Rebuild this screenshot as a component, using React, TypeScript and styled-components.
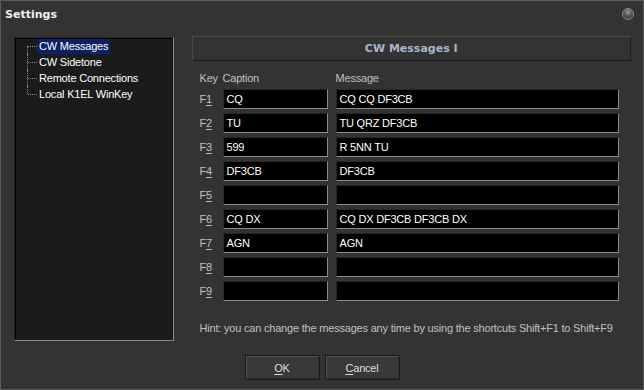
import React from 'react';
import styled, {createGlobalStyle} from "styled-components";

const GlobalStyle = createGlobalStyle`
  html, body {
    margin: 0;
    padding: 0;
    background: #333333;
  }
  body {
    font-family: "Liberation Sans", Arial, sans-serif;
    font-size: 11px;
    letter-spacing: -0.2px;
  }
`

interface Message {
    key: number,
    caption: string,
    text: string
}

const messages: Message[] = [
    {key: 1, caption: "CQ", text: "CQ CQ DF3CB"},
    {key: 2, caption: "TU", text: "TU QRZ DF3CB"},
    {key: 3, caption: "599", text: "R 5NN TU"},
    {key: 4, caption: "DF3CB", text: "DF3CB"},
    {key: 5, caption: "", text: ""},
    {key: 6, caption: "CQ DX", text: "CQ DX DF3CB DF3CB DX"},
    {key: 7, caption: "AGN", text: "AGN"},
    {key: 8, caption: "", text: ""},
    {key: 9, caption: "", text: ""},
]

const treeItems = ["CW Messages", "CW Sidetone", "Remote Connections", "Local K1EL WinKey"]

const Window = styled.div`
  width: 644px;
  height: 390px;
  box-sizing: border-box;
  border: 1px solid #5a5a5a;
  background: #333333;
  display: flex;
  flex-direction: column;
  color: #c8c8c8;
`

const TitleBar = styled.div`
  height: 26px;
  display: flex;
  align-items: center;
  justify-content: space-between;
  padding: 0 9px 0 4px;
`

const Title = styled.span`
  font-family: "DejaVu Sans", Verdana, sans-serif;
  font-weight: bold;
  font-size: 11px;
  letter-spacing: 0;
  color: #f0f0f0;
`

const CloseDot = styled.div`
  width: 10px;
  height: 10px;
  border-radius: 50%;
  border: 1px solid #8a8a8a;
  background: radial-gradient(circle at 50% 30%, #9a9a9a 0%, #5a5a5a 45%, #2a2a2a 100%);
`

const Body = styled.div`
  display: flex;
  gap: 18px;
  padding: 9px 12px 0 13px;
  height: 305px;
`

const Tree = styled.div`
  width: 160px;
  margin-top: 1px;
  box-sizing: border-box;
  background: #1b1b1b;
  border-top: 1px solid #262626;
  border-left: 1px solid #262626;
  border-right: 1px solid #8a8a8a;
  border-bottom: 1px solid #8a8a8a;
  box-shadow: inset 1px 1px 0 #000;
  padding: 0 0 0 12px;
`

const TreeRow = styled.div`
  height: 16px;
  display: flex;
  align-items: center;
`

const TreeLine = styled.span<{ last?: boolean, first?: boolean }>`
  width: 10px;
  align-self: stretch;
  position: relative;
  &::before {
    content: "";
    position: absolute;
    left: 0;
    top: ${p => p.first ? "8px" : "0"};
    height: ${p => p.first ? "8px" : p.last ? "8px" : "16px"};
    border-left: 1px dotted #8a8a8a;
  }
  &::after {
    content: "";
    position: absolute;
    left: 1px;
    top: 8px;
    width: 9px;
    border-top: 1px dotted #8a8a8a;
  }
`

const TreeLabel = styled.span<{ selected?: boolean }>`
  color: #ffffff;
  padding: 1px 2px;
  line-height: 13px;
  background: ${p => p.selected ? "#0c2264" : "transparent"};
`

const Content = styled.div`
  width: 441px;
  display: flex;
  flex-direction: column;
`

const Header = styled.div`
  height: 25px;
  box-sizing: border-box;
  border-top: 1px solid #4a4a4a;
  border-left: 1px solid #4a4a4a;
  border-right: 1px solid #1c1c1c;
  border-bottom: 1px solid #1c1c1c;
  display: flex;
  align-items: center;
  justify-content: center;
  font-family: "DejaVu Sans", Verdana, sans-serif;
  font-weight: bold;
  font-size: 11px;
  letter-spacing: 0;
  color: #a7b6cc;
`

const Grid = styled.div`
  display: grid;
  grid-template-columns: 15px 105px 283px;
  column-gap: 8px;
  row-gap: 4px;
  margin: 10px 0 0 8px;
`

const ColLabel = styled.div`
  height: 14px;
  line-height: 14px;
  white-space: nowrap;
  color: #c0c0c0;
`

const KeyLabel = styled.div`
  height: 20px;
  line-height: 20px;
  color: #c0c0c0;
  white-space: nowrap;
  u { text-underline-offset: 2px; }
`

const Field = styled.div`
  height: 20px;
  box-sizing: border-box;
  background: #000;
  border-top: 1px solid #262626;
  border-left: 1px solid #262626;
  border-right: 1px solid #8a8a8a;
  border-bottom: 1px solid #8a8a8a;
  color: #ffffff;
  line-height: 18px;
  padding-left: 3px;
  white-space: nowrap;
  overflow: hidden;
`

const Hint = styled.div`
  margin: 20px 0 0 8px;
  line-height: 14px;
  color: #c0c0c0;
  white-space: nowrap;
`

const Footer = styled.div`
  display: flex;
  justify-content: center;
  gap: 5px;
  padding-top: 14px;
`

const Button = styled.button`
  width: 75px;
  height: 25px;
  box-sizing: border-box;
  background: #393939;
  border: 1px solid #1a1a1a;
  box-shadow: inset 1px 1px 0 #505050, inset -1px -1px 0 #2c2c2c;
  color: #dcdcdc;
  font-family: "Liberation Sans", Arial, sans-serif;
  font-size: 11px;
  letter-spacing: -0.2px;
  padding: 0;
  u { text-underline-offset: 2px; }
`

const App = () => (
    <>
        <GlobalStyle/>
        <Window>
            <TitleBar>
                <Title>Settings</Title>
                <CloseDot/>
            </TitleBar>
            <Body>
                <Tree>
                    {treeItems.map((item, i) => (
                        <TreeRow key={item}>
                            <TreeLine first={i === 0} last={i === treeItems.length - 1}/>
                            <TreeLabel selected={i === 0}>{item}</TreeLabel>
                        </TreeRow>
                    ))}
                </Tree>
                <Content>
                    <Header>CW Messages I</Header>
                    <Grid>
                        <ColLabel>Key</ColLabel>
                        <ColLabel>Caption</ColLabel>
                        <ColLabel>Message</ColLabel>
                        {messages.map(m => (
                            <React.Fragment key={m.key}>
                                <KeyLabel>F<u>{m.key}</u></KeyLabel>
                                <Field>{m.caption}</Field>
                                <Field>{m.text}</Field>
                            </React.Fragment>
                        ))}
                    </Grid>
                    <Hint>Hint: you can change the messages any time by using the shortcuts Shift+F1 to Shift+F9</Hint>
                </Content>
            </Body>
            <Footer>
                <Button><u>O</u>K</Button>
                <Button><u>C</u>ancel</Button>
            </Footer>
        </Window>
    </>
);

export default App;
